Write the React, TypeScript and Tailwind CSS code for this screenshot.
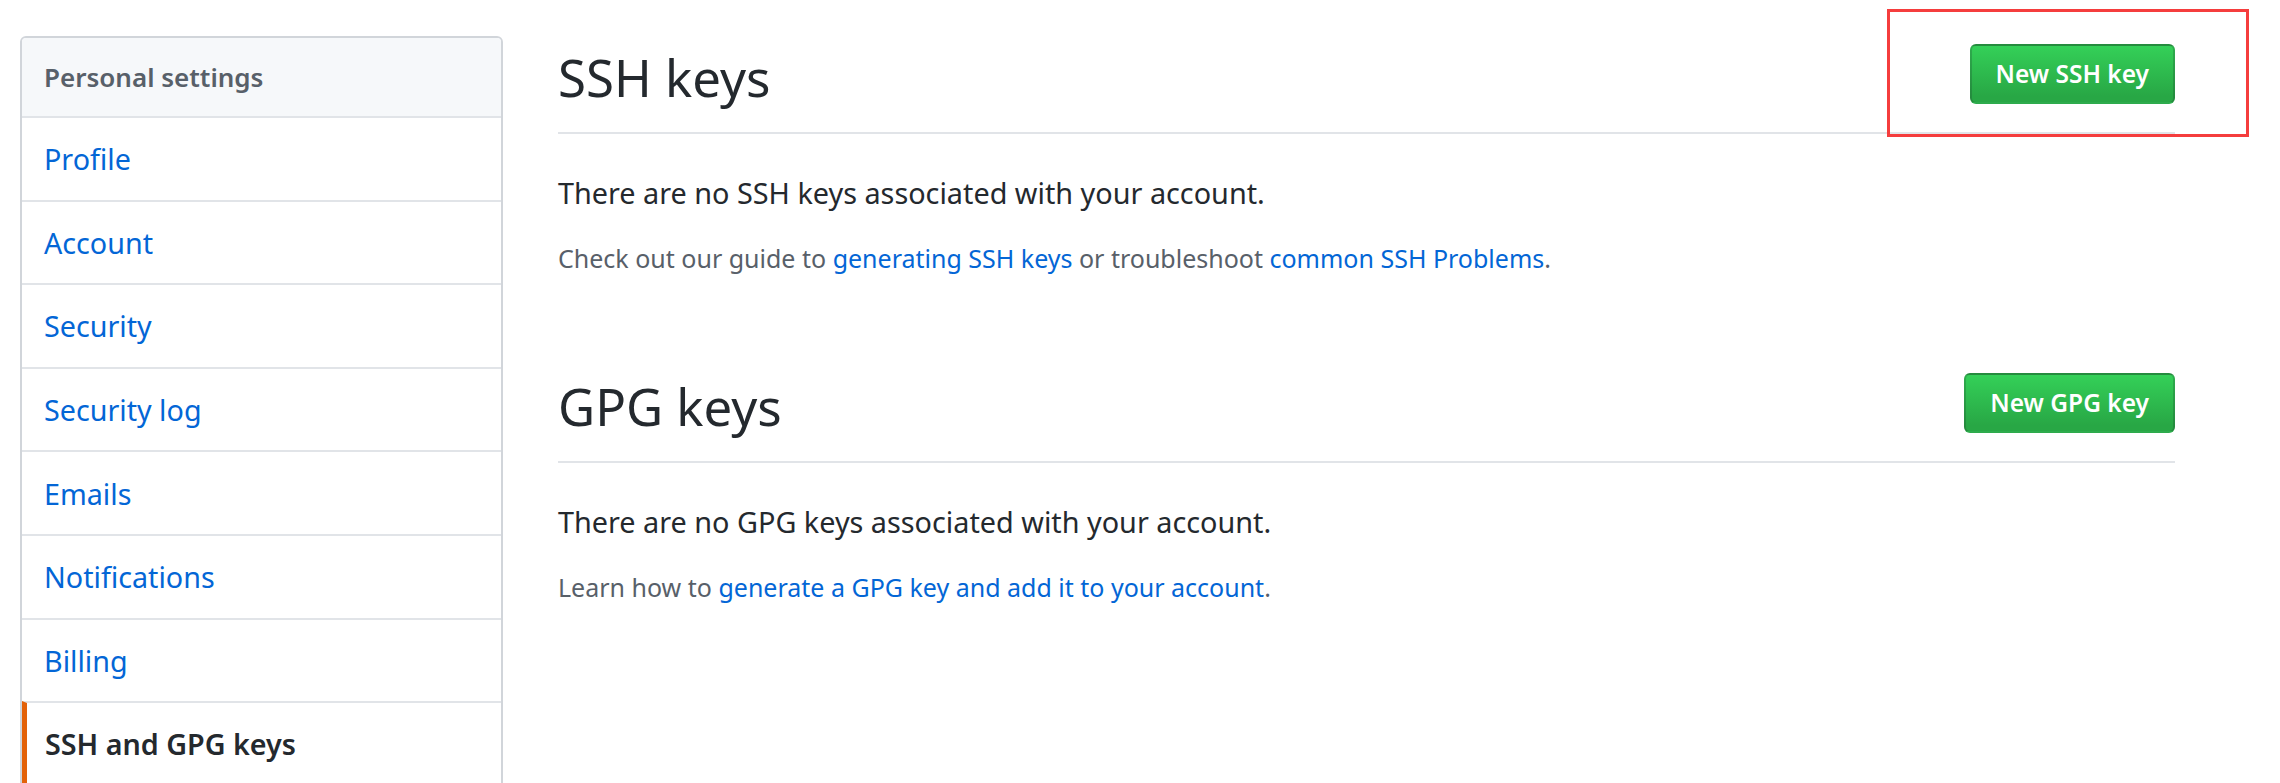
import React from "react";

const navItems = [
  "Profile",
  "Account",
  "Security",
  "Security log",
  "Emails",
  "Notifications",
  "Billing",
];

function GreenButton({ label }: { label: string }) {
  return (
    <button
      type="button"
      className="h-[60px] px-[24px] flex items-center justify-center rounded-[6px] border-2 border-[rgba(27,31,35,0.2)] bg-linear-to-b from-[#34d058] to-[#28a745] to-90% text-white text-[24.5px] font-semibold leading-none whitespace-nowrap"
    >
      {label}
    </button>
  );
}

function Subhead({ title, button }: { title: string; button: string }) {
  return (
    <div className="flex items-start justify-between pt-[8px] pb-[25px] border-b-2 border-[#e1e4e8]">
      <h2 className="mt-[3px] text-[51px] leading-[60px] font-normal text-[#24292e]">
        {title}
      </h2>
      <GreenButton label={button} />
    </div>
  );
}

export default function App() {
  return (
    <div
      className="relative w-[2280px] h-[783px] overflow-hidden bg-white"
      style={{ fontFamily: '"Noto Sans", "Open Sans", sans-serif' }}
    >
      <div className="flex items-start pt-[36px] pl-[20px]">
        {/* Sidebar */}
        <nav className="w-[483px] shrink-0 border-2 border-[#d1d5da] rounded-t-[6px] overflow-hidden">
          <div className="h-[78px] bg-[#f6f8fa] flex items-center pl-[22px] text-[26px] font-semibold text-[#586069]">
            Personal settings
          </div>
          {navItems.map((item) => (
            <div
              key={item}
              className="h-[83.6px] border-t-2 border-[#e1e4e8] flex items-center pl-[22px] text-[28.7px] text-[#0366d6]"
            >
              {item}
            </div>
          ))}
          <div className="h-[83.6px] border-t-2 border-[#e1e4e8] border-l-[5px] border-l-[#e36209] flex items-center pl-[18px] text-[28.7px] font-semibold text-[#24292e]">
            SSH and GPG keys
          </div>
        </nav>

        {/* Main */}
        <main className="ml-[55px] w-[1617px] shrink-0">
          <Subhead title="SSH keys" button="New SSH key" />
          <p className="mt-[39px] text-[28.8px] leading-[40px] text-[#24292e]">
            There are no SSH keys associated with your account.
          </p>
          <p className="mt-[26.5px] text-[25px] leading-[36px] text-[#586069]">
            Check out our guide to{" "}
            <a className="text-[#0366d6]">generating SSH keys</a> or troubleshoot{" "}
            <a className="text-[#0366d6]">common SSH Problems</a>.
          </p>

          <div className="mt-[89.7px]">
            <Subhead title="GPG keys" button="New GPG key" />
          </div>
          <p className="mt-[39px] text-[28.8px] leading-[40px] text-[#24292e]">
            There are no GPG keys associated with your account.
          </p>
          <p className="mt-[26.5px] text-[25px] leading-[36px] text-[#586069]">
            Learn how to{" "}
            <a className="text-[#0366d6]">generate a GPG key and add it to your account</a>.
          </p>
        </main>
      </div>

      {/* Red highlight annotation */}
      <div className="absolute left-[1887px] top-[9px] w-[362px] h-[128px] border-[3px] border-[#f53d3d] pointer-events-none" />
    </div>
  );
}
